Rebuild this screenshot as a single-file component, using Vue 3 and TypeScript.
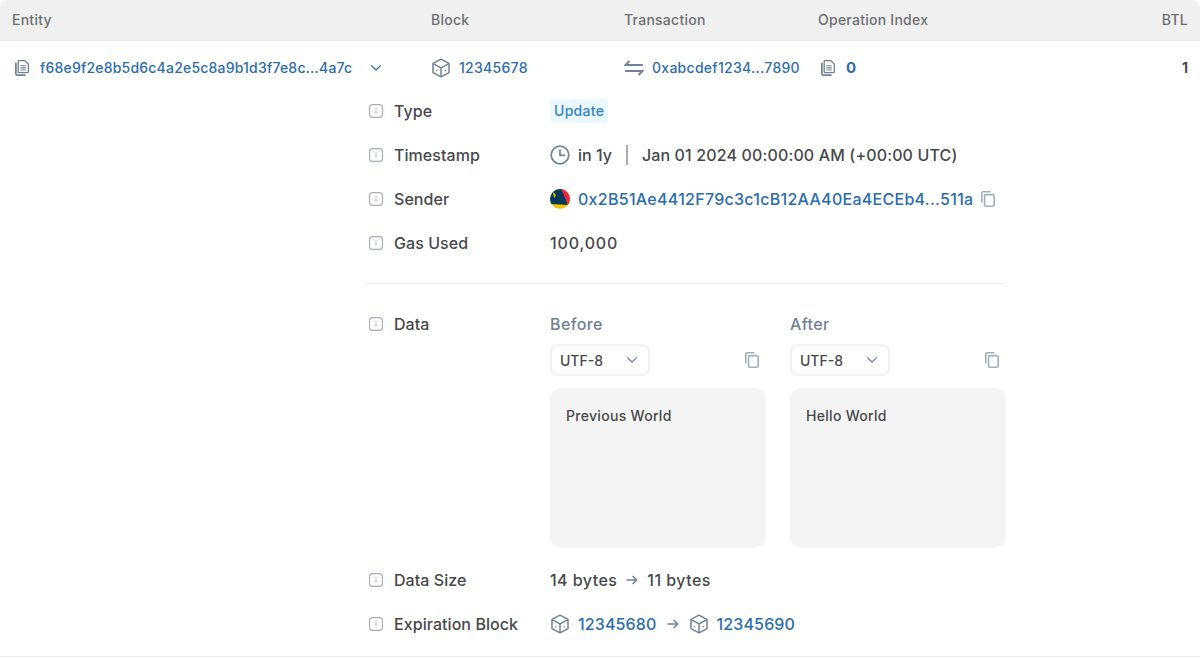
<script setup lang="ts">
const columns = ['Entity', 'Block', 'Transaction', 'Operation Index', 'BTL']
const dataBlocks = [
  { title: 'Before', value: 'Previous World' },
  { title: 'After', value: 'Hello World' },
]
</script>

<template>
  <div class="page">
    <svg width="0" height="0" class="defs">
      <symbol id="i-doc" viewBox="-3 -2 20 20">
        <path d="M3.200 1.400c0-.5.4-.8.8-.8h5.800l3.600 3.600v7.400c0 .6-.4 1-1 1H4c-.4 0-.8-.4-.8-.9z" fill="none" stroke="currentColor" stroke-width="1.300" />
        <path d="M.9 3.400v10.400c0 .8.600 1.400 1.400 1.400h7.600" fill="none" stroke="currentColor" stroke-width="1.700" stroke-linecap="round" />
        <path d="M5.400 5.800h5.400M5.400 7.900h5.400M5.400 10h5.400" stroke="currentColor" stroke-width="1.100" />
      </symbol>
      <symbol id="i-cube" viewBox="0 0 20 20">
        <path d="M10 1.200l8 4.200v9.200l-8 4.200-8-4.200V5.400z" fill="none" stroke="currentColor" stroke-width="1.500" stroke-linejoin="round" />
        <path d="M2.200 5.600L10 10l7.800-4.400M10 10v8.600" fill="none" stroke="currentColor" stroke-width="1.500" />
        <circle cx="5.600" cy="12.600" r=".8" fill="currentColor" />
        <circle cx="14.400" cy="12.600" r=".8" fill="currentColor" />
      </symbol>
      <symbol id="i-swap" viewBox="0 0 20 16">
        <path d="M5.400 1L1.600 5h17.200M14.600 15l3.800-4H1.200" fill="none" stroke="currentColor" stroke-width="2" />
      </symbol>
      <symbol id="i-info" viewBox="0 0 14 14">
        <rect x=".6" y=".6" width="12.800" height="12.800" rx="3" fill="none" stroke="currentColor" stroke-width="1.100" />
        <path d="M7 6.200v3.400" stroke="currentColor" stroke-width="1" />
        <circle cx="7" cy="4.400" r=".7" fill="currentColor" />
      </symbol>
      <symbol id="i-copy" viewBox="0 0 14 16">
        <rect x="3.600" y="3.600" width="9.600" height="11.600" rx="1.400" fill="none" stroke="currentColor" stroke-width="1.600" />
        <path d="M.8 11.600V2.200C.8 1.400 1.400.8 2.200.8h7.400" fill="none" stroke="currentColor" stroke-width="1.600" />
      </symbol>
      <symbol id="i-arrow" viewBox="0 0 12 10">
        <path d="M.5 5h10M6.600 1l4 4-4 4" fill="none" stroke="currentColor" stroke-width="1.500" />
      </symbol>
      <symbol id="i-chevron" viewBox="0 0 12 8">
        <path d="M1.200 1.400L6 6l4.800-4.600" fill="none" stroke="currentColor" stroke-width="1.300" />
      </symbol>
    </svg>

    <div class="grid head">
      <div v-for="c in columns" :key="c" class="head-cell">{{ c }}</div>
    </div>

    <div class="grid row">
      <div class="cell">
        <svg class="ic-doc"><use href="#i-doc" /></svg>
        <a class="link entity-link">f68e9f2e8b5d6c4a2e5c8a9b1d3f7e8c...4a7c</a>
        <svg class="ic-chevron blue"><use href="#i-chevron" /></svg>
      </div>
      <div class="cell">
        <svg class="ic-cube"><use href="#i-cube" /></svg>
        <a class="link">12345678</a>
      </div>
      <div class="cell">
        <svg class="ic-swap"><use href="#i-swap" /></svg>
        <a class="link">0xabcdef1234...7890</a>
      </div>
      <div class="cell">
        <svg class="ic-doc"><use href="#i-doc" /></svg>
        <a class="link strong">0</a>
      </div>
      <div class="cell end">1</div>
    </div>

    <div class="details">
      <div class="d-row">
        <div class="d-label"><svg class="ic-info"><use href="#i-info" /></svg>Type</div>
        <div class="d-value"><span class="tag">Update</span></div>
      </div>
      <div class="d-row">
        <div class="d-label"><svg class="ic-info"><use href="#i-info" /></svg>Timestamp</div>
        <div class="d-value">
          <svg class="ic-clock" viewBox="0 0 20 20">
            <circle cx="10" cy="10" r="8.800" fill="none" stroke="currentColor" stroke-width="1.700" />
            <path d="M10 4.600V10.400h5" fill="none" stroke="currentColor" stroke-width="1.700" />
          </svg>
          <span>in 1y</span>
          <span class="sep"></span>
          <span class="date">Jan 01 2024 00:00:00 AM (+00:00 UTC)</span>
        </div>
      </div>
      <div class="d-row">
        <div class="d-label"><svg class="ic-info"><use href="#i-info" /></svg>Sender</div>
        <div class="d-value">
          <svg class="ic-avatar" viewBox="0 0 20 20">
            <clipPath id="round"><circle cx="10" cy="10" r="10" /></clipPath>
            <g clip-path="url(#round)">
              <rect width="20" height="20" fill="#f5c400" />
              <path d="M-1-1h13l6 17-19-1z" fill="#033c5a" />
              <path d="M11 0h10v14l-2.500 2z" fill="#f5213c" />
              <path d="M3 3l3 3-2 3z" fill="#f5c400" />
            </g>
          </svg>
          <a class="link sender-link">0x2B51Ae4412F79c3c1cB12AA40Ea4ECEb4...511a</a>
          <svg class="ic-copy"><use href="#i-copy" /></svg>
        </div>
      </div>
      <div class="d-row">
        <div class="d-label"><svg class="ic-info"><use href="#i-info" /></svg>Gas Used</div>
        <div class="d-value gas">100,000</div>
      </div>

      <hr class="divider" />

      <div class="d-data">
        <div class="d-label data-label"><svg class="ic-info"><use href="#i-info" /></svg>Data</div>
        <div class="data-cols">
          <div v-for="d in dataBlocks" :key="d.title" class="data-col">
            <div class="data-title">{{ d.title }}</div>
            <div class="data-tools">
              <div class="select">
                <span>UTF-8</span>
                <svg class="ic-chevron"><use href="#i-chevron" /></svg>
              </div>
              <svg class="ic-copy"><use href="#i-copy" /></svg>
            </div>
            <div class="data-box">{{ d.value }}</div>
          </div>
        </div>
      </div>

      <div class="d-row">
        <div class="d-label"><svg class="ic-info"><use href="#i-info" /></svg>Data Size</div>
        <div class="d-value wide">
          <span>14 bytes</span>
          <svg class="ic-arrow"><use href="#i-arrow" /></svg>
          <span>11 bytes</span>
        </div>
      </div>
      <div class="d-row">
        <div class="d-label"><svg class="ic-info"><use href="#i-info" /></svg>Expiration Block</div>
        <div class="d-value">
          <svg class="ic-cube"><use href="#i-cube" /></svg>
          <a class="link">12345680</a>
          <svg class="ic-arrow spaced"><use href="#i-arrow" /></svg>
          <svg class="ic-cube"><use href="#i-cube" /></svg>
          <a class="link">12345690</a>
        </div>
      </div>
    </div>
    <div class="bottom-line"></div>
  </div>
</template>

<style>
body {
  background: #fff;
}
</style>

<style scoped>
.page {
  width: 1200px;
  height: 658px;
  overflow: hidden;
  font-family: Inter, 'Liberation Sans', sans-serif;
  font-weight: 450;
  color: #47484a;
  box-sizing: border-box;
  position: relative;
}
.defs {
  position: absolute;
}
.grid {
  display: grid;
  grid-template-columns: 419px 193px 194px 1fr 60px;
}
.head {
  height: 41px;
  box-sizing: border-box;
  background: #f0f0f0;
  border-bottom: 1px solid #e2e8f0;
  border-radius: 8px 8px 0 0;
}
.head-cell {
  padding: 0 12px;
  font-size: 14px;
  line-height: 40px;
  color: #6e6f70;
  letter-spacing: 0.25px;
}
.head-cell:last-child {
  text-align: right;
}
.row {
  height: 48px;
}
.cell {
  display: flex;
  align-items: center;
  padding: 0 12px;
  font-size: 14px;
  gap: 8px;
  height: 53px;
}
.end {
  justify-content: flex-end;
  font-weight: 700;
}
.link {
  color: #2b6cb0;
  white-space: nowrap;
  letter-spacing: 0.28px;
}
.entity-link {
  letter-spacing: 0.2px;
}
.strong {
  font-weight: 700;
  font-size: 15px;
}
.ic-doc {
  width: 20px;
  height: 20px;
  color: #718096;
  flex: none;
}
.ic-cube {
  width: 20px;
  height: 20px;
  color: #718096;
  flex: none;
}
.ic-swap {
  width: 20px;
  height: 16px;
  color: #718096;
  flex: none;
}
.ic-info {
  width: 14px;
  height: 14px;
  color: #a0aec0;
  flex: none;
}
.ic-copy {
  width: 14px;
  height: 16px;
  color: #a0aec0;
  flex: none;
}
.ic-arrow {
  width: 12px;
  height: 10px;
  color: #718096;
  flex: none;
}
.ic-arrow.spaced {
  margin: 0 2px;
}
.ic-chevron {
  width: 12px;
  height: 8px;
  color: #718096;
  flex: none;
}
.ic-chevron.blue {
  color: #2b6cb0;
  margin-left: 10px;
}
.ic-clock {
  width: 20px;
  height: 20px;
  color: #718096;
  flex: none;
}
.ic-avatar {
  width: 20px;
  height: 20px;
  flex: none;
}
.details {
  width: 640px;
  margin-left: 366px;
}
.d-row {
  display: flex;
  align-items: center;
  height: 44px;
  font-size: 16px;
}
.d-row .link {
  letter-spacing: 0.14px;
}
.d-row .sender-link {
  letter-spacing: 0.28px;
}
.d-label {
  width: 184px;
  flex: none;
  display: flex;
  align-items: center;
  gap: 11px;
  padding-left: 3px;
  box-sizing: border-box;
  white-space: nowrap;
  letter-spacing: 0.06px;
}
.d-value {
  display: flex;
  align-items: center;
  gap: 8px;
  white-space: nowrap;
}
.d-value.wide {
  gap: 9px;
  letter-spacing: 0.45px;
}
.d-value.gas {
  letter-spacing: 0.85px;
}
.date {
  letter-spacing: 0.14px;
}
.tag {
  height: 24px;
  line-height: 24px;
  padding: 0 4px;
  border-radius: 4px;
  background: #ebf8ff;
  color: #3182ce;
  font-size: 14px;
  letter-spacing: 0.3px;
}
.sep {
  width: 2px;
  height: 20px;
  background: #a0aec0;
  margin: 0 6px;
}
.divider {
  border: 0;
  border-top: 1px solid #ececec;
  margin: 18px 0 22px;
}
.d-data {
  display: flex;
  font-size: 16px;
}
.data-label {
  height: 36px;
  align-items: center;
  margin-top: -0.5px;
}
.data-cols {
  display: flex;
  gap: 24px;
}
.data-col {
  width: 216px;
}
.data-title {
  color: #718096;
  line-height: 24px;
  height: 30px;
  padding-top: 6px;
  font-weight: 500;
  letter-spacing: 0.4px;
}
.data-tools {
  display: flex;
  align-items: center;
  justify-content: space-between;
  padding-right: 7px;
  margin-top: 2px;
}
.select {
  width: 100px;
  height: 32px;
  box-sizing: border-box;
  border: 2px solid #edf2f7;
  border-radius: 8px;
  display: flex;
  align-items: center;
  justify-content: space-between;
  padding: 0 10px 0 8px;
  font-size: 14px;
  font-weight: 500;
}
.data-box {
  height: 160px;
  box-sizing: border-box;
  margin-top: 12px;
  margin-bottom: 10px;
  padding: 16px;
  background: #f4f4f4;
  border-radius: 12px;
  font-size: 14px;
  line-height: 24px;
  letter-spacing: 0.3px;
}
.bottom-line {
  position: absolute;
  left: 0;
  right: 0;
  top: 656px;
  border-top: 1px solid #ececec;
}
</style>
